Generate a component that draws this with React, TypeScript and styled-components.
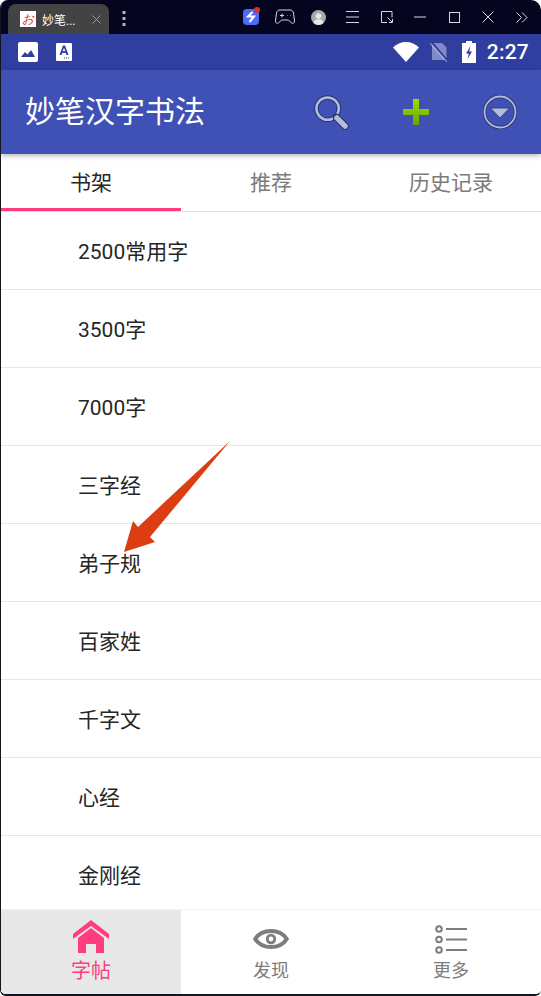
import React from 'react';
import styled, { createGlobalStyle } from 'styled-components';

const GlobalStyle = createGlobalStyle`
  html, body {
    margin: 0;
    padding: 0;
    background: #fff;
  }
  * {
    box-sizing: border-box;
  }
`;

const Frame = styled.div`
  position: relative;
  width: 541px;
  height: 996px;
  display: flex;
  flex-direction: column;
  overflow: hidden;
  background: #fff;
  border-left: 1px solid #14161f;
  border-bottom: 2px solid #14161f;
  border-radius: 8px 10px 6px 6px;
  font-family: Roboto, "Noto Sans CJK SC", sans-serif;
`;

const TitleBar = styled.div`
  height: 34px;
  flex: none;
  margin-left: -1px;
  display: flex;
  align-items: flex-end;
  background: #05051f;
  color: #fff;
`;

const BrowserTab = styled.div`
  width: 101px;
  height: 30px;
  margin-left: 8px;
  padding: 0 8px 0 12px;
  display: flex;
  align-items: center;
  background: #434343;
  border-radius: 8px 8px 0 0;
`;

const TabLogo = styled.span`
  width: 16px;
  height: 16px;
  flex: none;
  display: flex;
  align-items: center;
  justify-content: center;
  background: #fff;
  color: #e0262c;
  font-size: 12px;
  line-height: 16px;
  font-family: "Liberation Serif", serif;
  font-style: italic;
`;

const TabTitle = styled.span`
  flex: 1;
  margin-left: 6px;
  font-size: 12px;
  white-space: nowrap;
`;

const TabClose = styled.svg`
  width: 9px;
  height: 9px;
  flex: none;
  stroke: #9a9a9a;
  fill: none;
`;

const KebabDots = styled.svg`
  width: 4px;
  height: 16px;
  margin-left: 13px;
  margin-bottom: 7px;
  flex: none;
  fill: #b5b5b5;
`;

const WindowTools = styled.div`
  margin-left: auto;
  height: 34px;
  display: flex;
  align-items: center;
  padding-right: 2px;
`;

const ToolSlot = styled.span`
  width: 33.875px;
  height: 34px;
  display: flex;
  align-items: center;
  justify-content: center;
  flex: none;
`;

const ToolIcon = styled.svg`
  display: block;
  fill: none;
  stroke: #d8d8de;
  stroke-width: 1;
`;

const StatusBar = styled.div`
  height: 36px;
  flex: none;
  display: flex;
  align-items: center;
  padding: 0 12px 0 17px;
  background: #303f9f;
`;

const StatusLeft = styled.div`
  display: flex;
  align-items: center;
  gap: 18px;
`;

const StatusRight = styled.div`
  margin-left: auto;
  display: flex;
  align-items: center;
`;

const StatusIcon = styled.svg<{ $gap?: number }>`
  display: block;
  flex: none;
  margin-left: ${(p) => p.$gap ?? 0}px;
`;

const Clock = styled.span`
  margin-left: 11px;
  color: #fff;
  font-size: 21px;
  font-weight: 500;
  line-height: 36px;
  letter-spacing: 0.2px;
`;

const AppBar = styled.header`
  position: relative;
  z-index: 2;
  height: 84px;
  flex: none;
  display: flex;
  align-items: center;
  padding: 0 24px 0 24px;
  background: #3f51b5;
  box-shadow: 0 2px 5px rgba(0, 0, 0, 0.28);
`;

const AppTitle = styled.h1`
  margin: 0;
  color: #fff;
  font-size: 30px;
  font-weight: 400;
  line-height: 84px;
`;

const AppActions = styled.div`
  margin-left: auto;
  display: flex;
  align-items: center;
  gap: 54px;
`;

const ActionIcon = styled.svg`
  display: block;
  flex: none;
`;

const TabRow = styled.nav`
  height: 58px;
  flex: none;
  display: grid;
  grid-template-columns: repeat(3, 1fr);
  border-bottom: 1px solid #e2e2e2;
  background: #fff;
`;

const TabItem = styled.div<{ $active?: boolean }>`
  height: 57px;
  display: flex;
  align-items: center;
  justify-content: center;
  padding-bottom: 1px;
  font-size: 21px;
  color: ${(p) => (p.$active ? '#262626' : '#7b7b7b')};
  border-bottom: 3px solid ${(p) => (p.$active ? '#ff3d7f' : 'transparent')};
`;

const BookList = styled.ul`
  flex: 1;
  min-height: 0;
  margin: 0;
  padding: 0;
  list-style: none;
  overflow: hidden;
`;

const BookRow = styled.li`
  height: 78px;
  display: flex;
  align-items: center;
  padding: 0 0 2px 77px;
  border-bottom: 1px solid #e6e6e6;
  color: #262626;
  font-size: 21px;
`;

const BottomNav = styled.footer`
  height: 85px;
  flex: none;
  display: grid;
  grid-template-columns: repeat(3, 1fr);
  border-top: 1px solid #f2f2f2;
  background: #fff;
`;

const NavItem = styled.div<{ $active?: boolean }>`
  display: flex;
  flex-direction: column;
  align-items: center;
  color: ${(p) => (p.$active ? '#ff3d7f' : '#7d7d7d')};
  background: ${(p) => (p.$active ? '#e8e8e8' : 'transparent')};
`;

const NavIconBox = styled.div`
  height: 43px;
  display: flex;
  align-items: flex-end;
  justify-content: center;
`;

const NavLabel = styled.span<{ $active?: boolean }>`
  font-size: ${(p) => (p.$active ? 20 : 18)}px;
  line-height: 26px;
  margin-top: 5px;
`;

const HomeIcon = styled.svg`
  display: block;
`;

const EyeIcon = styled.svg`
  display: block;
  margin-bottom: 4px;
`;

const ListIcon = styled.svg`
  display: block;
  margin-bottom: -1px;
`;

const ArrowOverlay = styled.svg`
  position: absolute;
  left: 119px;
  top: 438px;
  pointer-events: none;
`;

const books = ['2500常用字', '3500字', '7000字', '三字经', '弟子规', '百家姓', '千字文', '心经', '金刚经'];

const App: React.FC = () => {
  return (
    <Frame>
      <GlobalStyle />
      <TitleBar>
        <BrowserTab>
          <TabLogo>お</TabLogo>
          <TabTitle>妙笔...</TabTitle>
          <TabClose viewBox="0 0 9 9">
            <path d="M.5.5l8 8M8.5.5l-8 8" />
          </TabClose>
        </BrowserTab>
        <KebabDots viewBox="0 0 4 16">
          <rect x="0.5" y="0" width="3" height="3" />
          <rect x="0.5" y="6" width="3" height="3" />
          <rect x="0.5" y="12" width="3" height="3" />
        </KebabDots>
        <WindowTools>
          <ToolSlot>
            <ToolIcon width="18" height="20" viewBox="0 0 18 20">
              <rect x="1" y="2" width="16" height="16" rx="4" fill="#4a6cf7" stroke="none" />
              <path d="M10.500 5L6 9.500h6L7.500 15" stroke="#fff" strokeWidth="2" />
              <circle cx="15" cy="3" r="3" fill="#cc3333" stroke="none" />
            </ToolIcon>
          </ToolSlot>
          <ToolSlot>
            <ToolIcon width="20" height="16" viewBox="0 0 20 16">
              <path d="M5 1h10c2 0 3 1 3.500 3L19.500 12c.2 2-1.800 3-3 2l-3-3h-7l-3 3c-1.200 1-3.200 0-3-2L1.500 4C2 2 3 1 5 1z" />
              <path d="M5 6.500h4M7 4.500v4M12.500 6.500h.5M15 6.500h.5" />
            </ToolIcon>
          </ToolSlot>
          <ToolSlot>
            <ToolIcon width="15" height="15" viewBox="0 0 15 15">
              <circle cx="7.500" cy="7.500" r="7.500" fill="#a8a8a8" stroke="none" />
              <circle cx="7.500" cy="6" r="2.800" fill="#e8e8e8" stroke="none" />
              <path d="M2.500 13c.5-3 2.500-3.800 5-3.800s4.500.8 5 3.800a7.500 7.500 0 0 1-10 0z" fill="#e8e8e8" stroke="none" />
            </ToolIcon>
          </ToolSlot>
          <ToolSlot>
            <ToolIcon width="13" height="12" viewBox="0 0 13 12">
              <path d="M0 .5h13M0 6h13M0 11.500h13" />
            </ToolIcon>
          </ToolSlot>
          <ToolSlot>
            <ToolIcon width="12" height="12" viewBox="0 0 12 12">
              <path d="M6 11.500H.5V.5h10.500v6" />
              <path d="M6.500 6.500l4.500 4.500M8 11.500h3.500V8" />
            </ToolIcon>
          </ToolSlot>
          <ToolSlot>
            <ToolIcon width="12" height="2" viewBox="0 0 12 2">
              <path d="M0 1h12" />
            </ToolIcon>
          </ToolSlot>
          <ToolSlot>
            <ToolIcon width="11" height="11" viewBox="0 0 11 11">
              <rect x="0.500" y="0.500" width="10" height="10" />
            </ToolIcon>
          </ToolSlot>
          <ToolSlot>
            <ToolIcon width="12" height="12" viewBox="0 0 12 12">
              <path d="M.5.500l11 11M11.500.500l-11 11" />
            </ToolIcon>
          </ToolSlot>
          <ToolSlot>
            <ToolIcon width="12" height="11" viewBox="0 0 12 11">
              <path d="M.5.500l5 5-5 5M6 .5l5 5-5 5" />
            </ToolIcon>
          </ToolSlot>
        </WindowTools>
      </TitleBar>

      <StatusBar>
        <StatusLeft>
          <StatusIcon width="20" height="20" viewBox="0 0 20 20">
            <rect width="20" height="20" rx="2" fill="#fff" />
            <path d="M3 15l4-5 2.500 2.500L13 8l4 7z" fill="#303f9f" />
          </StatusIcon>
          <StatusIcon width="16" height="18" viewBox="0 0 16 18">
            <rect width="16" height="18" rx="1" fill="#fff" />
            <path d="M3.500 12L7 2.500h2L12.500 12h-2l-.7-2H6.200l-.7 2zM6.700 8.300h2.600L8 4.800z" fill="#303f9f" fillRule="evenodd" />
            <path d="M8 15h6" stroke="#303f9f" strokeDasharray="1 1" />
          </StatusIcon>
        </StatusLeft>
        <StatusRight>
          <StatusIcon width="26" height="20" viewBox="0 0 26 20">
            <path d="M0 5.500C3.500 2 8 0 13 0s9.500 2 13 5.500L13 20z" fill="#fff" />
          </StatusIcon>
          <StatusIcon $gap={11} width="19" height="20" viewBox="0 0 19 20">
            <path d="M2 1h10l4.500 4.500V18H2z" fill="#fff" fillOpacity="0.4" />
            <path d="M1.500 0l17 20" stroke="#303f9f" strokeWidth="2" />
            <path d="M0 1l17 19" stroke="#fff" strokeOpacity="0.4" strokeWidth="1.200" />
          </StatusIcon>
          <StatusIcon $gap={13} width="14" height="22" viewBox="0 0 14 22">
            <path d="M4 0h6v2h4v20H0V2h4z" fill="#fff" />
            <path d="M8.500 5L4 12.500h2.800L5.500 18 10 10.500H7.200z" fill="#303f9f" />
          </StatusIcon>
          <Clock>2:27</Clock>
        </StatusRight>
      </StatusBar>

      <AppBar>
        <AppTitle>妙笔汉字书法</AppTitle>
        <AppActions>
          <ActionIcon width="35" height="35" viewBox="0 0 36 36">
            <circle cx="14" cy="14" r="11.500" fill="none" stroke="#26336b" strokeWidth="4.600" />
            <circle cx="14" cy="14" r="11.500" fill="none" stroke="#b4bbe0" strokeWidth="2.600" />
            <path d="M23 23l9 9" stroke="#26336b" strokeWidth="7.500" strokeLinecap="round" />
            <path d="M23.500 23.500l8.500 8.500" stroke="#b4bbe0" strokeWidth="5.500" strokeLinecap="round" />
          </ActionIcon>
          <ActionIcon width="26" height="26" viewBox="0 0 26 26">
            <defs>
              <linearGradient id="plusFill" x1="0" y1="0" x2="0" y2="1">
                <stop offset="0" stopColor="#9ade00" />
                <stop offset="1" stopColor="#6aa300" />
              </linearGradient>
            </defs>
            <path d="M10 0h6v10h10v6H16v10h-6V16H0v-6h10z" fill="url(#plusFill)" />
          </ActionIcon>
          <ActionIcon width="34" height="34" viewBox="0 0 34 34">
            <circle cx="17" cy="17" r="15.500" fill="none" stroke="#26336b" strokeWidth="3.400" />
            <circle cx="17" cy="17" r="15.500" fill="none" stroke="#b4bbe0" strokeWidth="1.800" />
            <path d="M7.500 13h19L17 23z" fill="#b4bbe0" stroke="#26336b" strokeWidth="0.800" />
          </ActionIcon>
        </AppActions>
      </AppBar>

      <TabRow>
        <TabItem $active>书架</TabItem>
        <TabItem>推荐</TabItem>
        <TabItem>历史记录</TabItem>
      </TabRow>

      <BookList>
        {books.map((name) => (
          <BookRow key={name}>{name}</BookRow>
        ))}
      </BookList>

      <BottomNav>
        <NavItem $active>
          <NavIconBox>
            <HomeIcon width="36" height="33" viewBox="0 0 36 33">
              <path d="M18 0L36 14v5L18 6 0 19v-5z" fill="#ff3d7f" />
              <path d="M5 18L18 8l13 10v15h-8V24H13v9H5z" fill="#ff3d7f" />
            </HomeIcon>
          </NavIconBox>
          <NavLabel $active>字帖</NavLabel>
        </NavItem>
        <NavItem>
          <NavIconBox>
            <EyeIcon width="36" height="20" viewBox="0 0 36 20">
              <path d="M2.200 10C6 4 11.500 2 18 2s12 2 15.800 8C30 16 24.500 18 18 18S6 16 2.200 10z" fill="none" stroke="#7d7d7d" strokeWidth="4" />
              <circle cx="18" cy="10" r="3.800" fill="none" stroke="#7d7d7d" strokeWidth="2.800" />
            </EyeIcon>
          </NavIconBox>
          <NavLabel>发现</NavLabel>
        </NavItem>
        <NavItem>
          <NavIconBox>
            <ListIcon width="33" height="29" viewBox="0 0 33 29">
              <g fill="none" stroke="#7d7d7d" strokeWidth="2">
                <circle cx="4" cy="4" r="2.800" />
                <circle cx="4" cy="14.500" r="2.800" />
                <circle cx="4" cy="25" r="2.800" />
                <path d="M11 4h21M11 14.500h21M11 25h21" />
              </g>
            </ListIcon>
          </NavIconBox>
          <NavLabel>更多</NavLabel>
        </NavItem>
      </BottomNav>

      <ArrowOverlay width="112" height="116" viewBox="119 438 112 116">
        <path d="M229 441L137 527L132 521L123 552L154 542L149 537Z" fill="#dc3d12" />
      </ArrowOverlay>
    </Frame>
  );
};

export default App;
